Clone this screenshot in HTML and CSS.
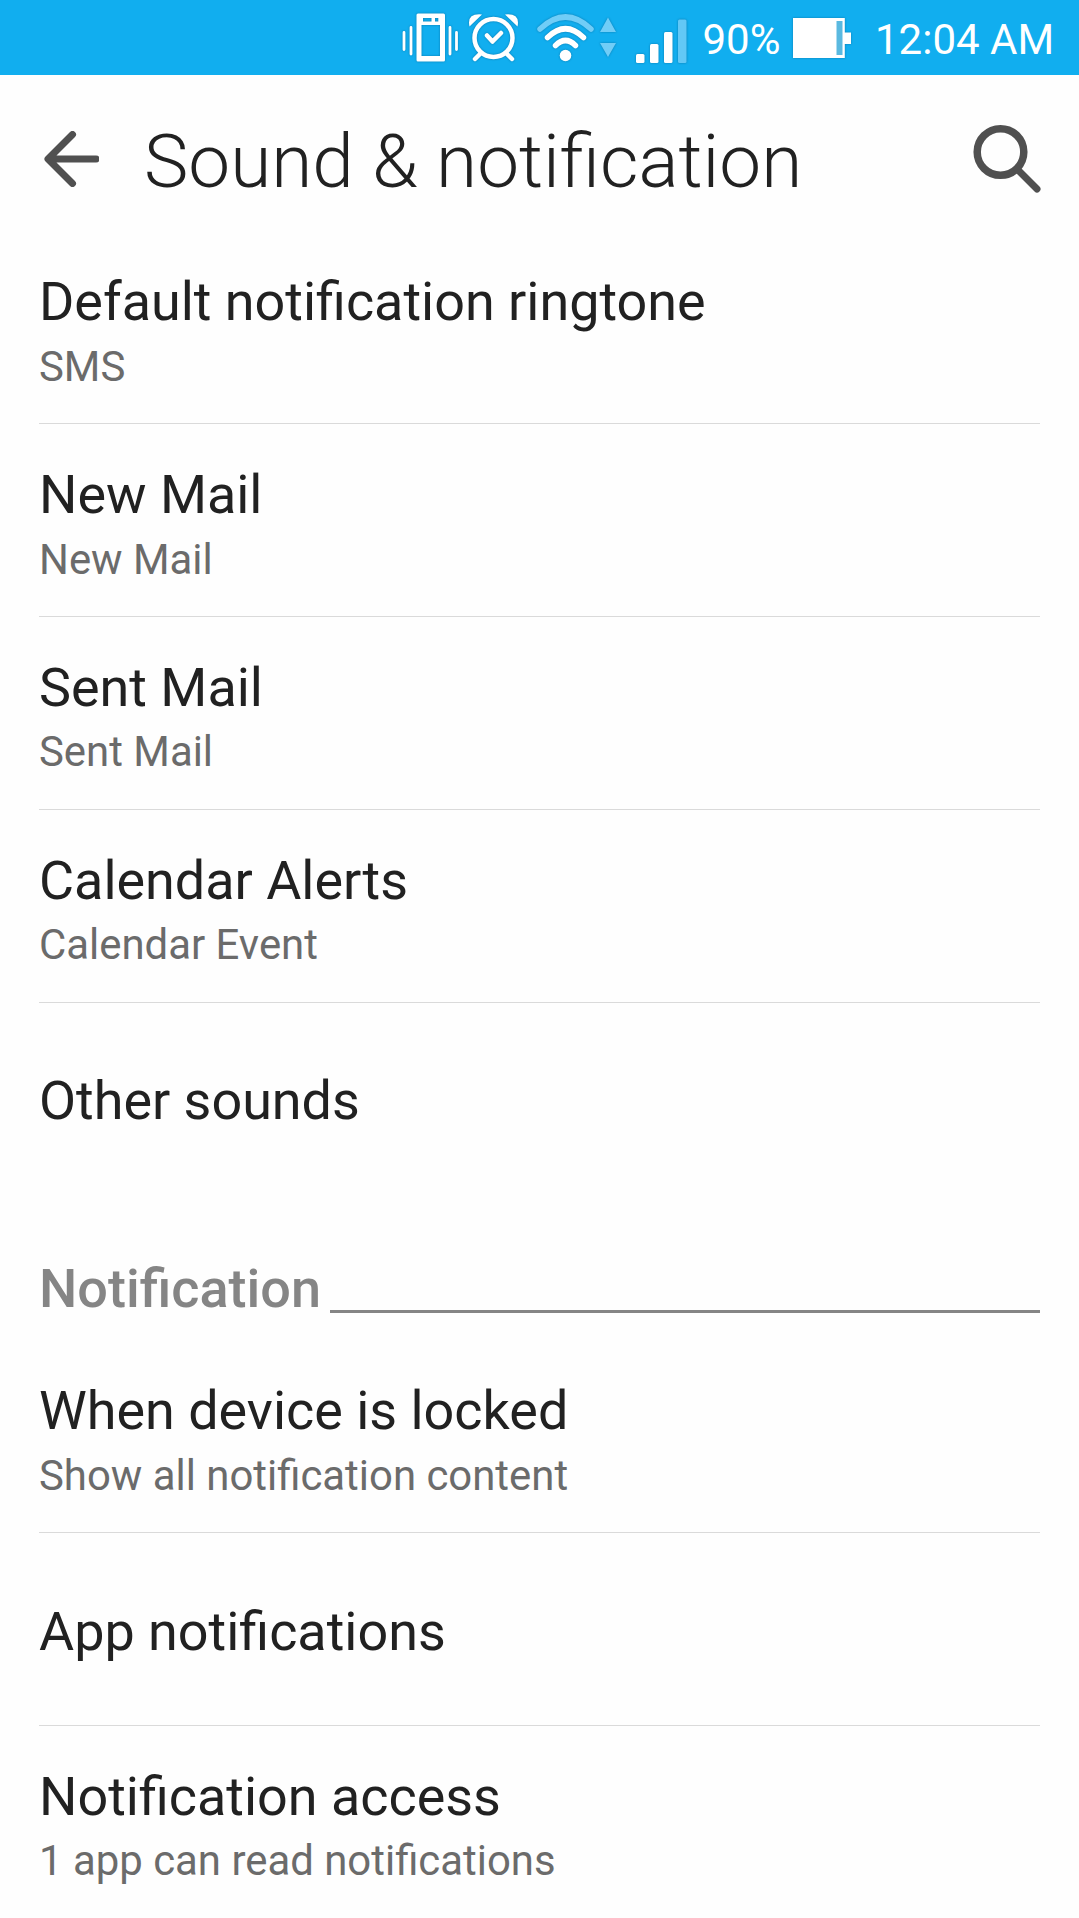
FILE: index.html
```html
<!DOCTYPE html>
<html lang="en">
<head>
<meta charset="utf-8">
<title>Sound &amp; notification</title>
<link rel="stylesheet" href="styles.css">
</head>
<body>
<div class="statusbar">
  <svg class="status-icons" width="300" height="75" viewBox="0 0 300 75" fill="none" stroke="#fff" stroke-linecap="round">
    <g stroke-width="2.8">
      <path d="M14 32.500V49.500M21 27.500V54M60 27.500V54M66.500 32.500V49.500"/>
    </g>
    <path fill="#fff" stroke="none" fill-rule="evenodd" d="M28 13.500H53.500Q55 13.500 55 15V60Q55 61.500 53.500 61.500H28Q26.500 61.500 26.500 60V15Q26.500 13.500 28 13.500ZM31.500 25V56H50V25ZM33 18V21.500H41.500V18ZM45 18V21.500H48.300V18Z"/>
    <circle cx="103.500" cy="38" r="19" stroke-width="4.500"/>
    <path stroke-width="4.500" stroke-linejoin="round" d="M97 35.500L102.500 41.500L111 33M90 54L85 59M117 54L122 59"/>
    <path fill="#fff" stroke="none" d="M79.500 26.500Q76.500 13 92 14.500ZM127.500 26.500Q130.500 13 115 14.500Z"/>
    <path stroke="#70cdf7" stroke-width="5.500" d="M150 29Q175.500 5 201 29"/>
    <path stroke-width="5.500" d="M157.500 37.500Q175.500 20 193.500 37.500M165.500 45.500Q175.500 35.500 185.500 45.500"/>
    <circle cx="175.500" cy="55.500" r="5.800" fill="#fff" stroke="none"/>
    <path fill="#70cdf7" stroke="none" d="M218 17.500L226 32H210ZM218 57L226 43H210Z"/>
    <g fill="#fff" stroke="none">
      <rect x="246" y="54" width="8.500" height="9" rx="1.500"/>
      <rect x="260" y="44" width="8.500" height="19" rx="1.500"/>
      <rect x="274" y="32" width="8.500" height="31" rx="1.500"/>
      <rect x="288" y="19.500" width="8.500" height="43.500" rx="1.500" fill="#62c8f6"/>
    </g>
  </svg>
  <span class="percent">90%</span>
  <svg class="battery" width="60" height="75" viewBox="0 0 60 75">
    <path fill="#fff" d="M1 18H52.800V32.500H59V44H52.800V58H1Z"/>
    <path fill="#5ab9e0" d="M44.500 21H50.500V55H44.500Z"/>
  </svg>
  <span class="clock">12:04 AM</span>
</div>
<header class="appbar">
  <svg class="back" width="56" height="56" viewBox="0 0 56 56" fill="none" stroke="#505050" stroke-width="7" stroke-linecap="round" stroke-linejoin="round">
    <path d="M29.500 3.500L5 28L29.500 52.500M6 28H53"/>
  </svg>
  <h1 class="title">Sound &amp; notification</h1>
  <svg class="search" width="68" height="70" viewBox="0 0 68 70" fill="none" stroke="#505050" stroke-linecap="round">
    <circle cx="27.500" cy="28" r="23.300" stroke-width="7.500"/>
    <path stroke-width="7" d="M44 45L64 65"/>
  </svg>
</header>
<main class="list">
  <div class="row"><div class="name">Default notification ringtone</div><div class="value">SMS</div></div>
  <div class="row"><div class="name">New Mail</div><div class="value">New Mail</div></div>
  <div class="row"><div class="name">Sent Mail</div><div class="value">Sent Mail</div></div>
  <div class="row"><div class="name">Calendar Alerts</div><div class="value">Calendar Event</div></div>
  <div class="row single last"><div class="name">Other sounds</div></div>
  <div class="section"><h2 class="section-name">Notification</h2><div class="rule"></div></div>
  <div class="row"><div class="name">When device is locked</div><div class="value">Show all notification content</div></div>
  <div class="row single"><div class="name">App notifications</div></div>
  <div class="row last"><div class="name">Notification access</div><div class="value">1 app can read notifications</div></div>
</main>
</body>
</html>
```
FILE: styles.css
```css
* { box-sizing: border-box; }
body {
  margin: 0;
  height: 1918px;
  overflow: hidden;
  background: #fefefe;
  color: #212121;
  font-family: Roboto, "Liberation Sans", sans-serif;
}
.statusbar {
  display: flex;
  height: 75px;
  padding-left: 390px;
  background: #11aeef;
  color: #fff;
  font-size: 42px;
  line-height: 79px;
  white-space: nowrap;
}
.status-icons, .battery, .back, .search { display: block; flex: none; }
.status-icons, .battery { filter: drop-shadow(0 0 1px rgba(0, 60, 100, 0.45)); }
.percent { width: 80px; margin-left: 12.5px; }
.battery { margin-left: 9.5px; }
.clock { margin-left: 23px; }
.appbar {
  display: flex;
  align-items: flex-start;
  height: 156.4px;
  padding: 0 38px 0 43px;
}
.back { margin-top: 56px; }
.title {
  flex: 1;
  margin: 41px 0 0 45px;
  font-size: 74.7px;
  font-weight: 300;
  line-height: 92px;
  white-space: nowrap;
}
.search { margin-top: 49px; }
.list { padding: 0 39px; }
.row {
  display: flex;
  flex-direction: column;
  gap: 7.4px;
  height: 192.8px;
  padding-top: 39px;
  border-bottom: 1px solid #dadada;
}
.single { padding-top: 66.5px; }
.last { border-bottom-color: transparent; }
.name { font-size: 53.9px; line-height: 64px; }
.value { color: #6b6b6b; font-size: 41.9px; line-height: 50px; }
.section {
  display: flex;
  align-items: flex-end;
  gap: 9px;
  height: 145px;
  padding-bottom: 27.8px;
}
.section-name {
  margin: 0;
  color: #858585;
  font-size: 54px;
  font-weight: 500;
  line-height: 48px;
}
.rule { flex: 1; height: 3px; background: #858585; }
```
